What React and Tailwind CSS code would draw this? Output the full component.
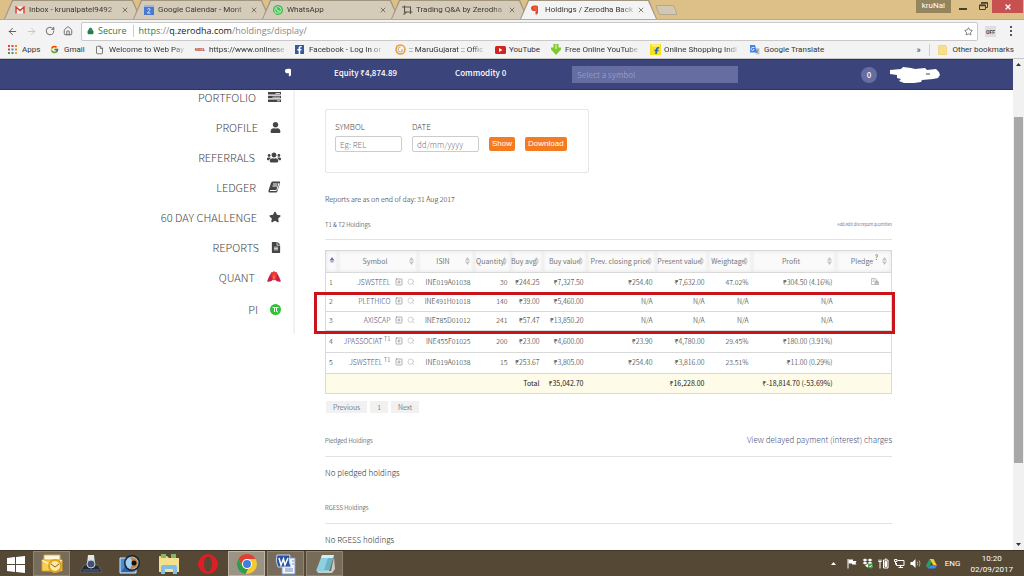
import React, { useState } from "react"
import {
  FaUser,
  FaUsers,
  FaStar,
  FaFileAlt,
  FaFacebookF,
  FaWhatsapp,
} from "react-icons/fa"
import { FcGoogle } from "react-icons/fc"
import {
  ArrowLeft,
  ArrowRight,
  RotateCw,
  House,
  LockKeyhole,
  Star,
  File,
  X,
  SquarePlus,
  Search,
} from "lucide-react"

/* ---------- small icons ---------- */

const GmailIcon = () => (
  <svg viewBox="0 0 20 16" className="w-[10px] h-[8px]">
    <rect x="1" y="1" width="18" height="14" fill="#f4f1ee" />
    <path d="M2 15V2l8 7 8-7v13" fill="none" stroke="#d5402f" strokeWidth="3" />
  </svg>
)

const CalendarIcon = () => (
  <svg viewBox="0 0 20 20" className="w-[10px] h-[10px]">
    <rect width="20" height="20" rx="1" fill="#4b78cf" />
    <rect width="20" height="4" fill="#9db5e0" />
    <path
      d="M7 9c1-3 6-2 5 1-.5 2-5 4-5 6h6"
      fill="none"
      stroke="#fff"
      strokeWidth="1.6"
    />
  </svg>
)

const WhatsappIcon = () => (
  <span className="flex items-center justify-center w-[10px] h-[10px] rounded-full bg-[#3fbf4f] text-white">
    <FaWhatsapp className="w-[8px] h-[8px]" />
  </span>
)

// crop-like frame with a tail in the lower left corner
const TradingIcon = () => (
  <svg viewBox="0 0 22 20" className="w-[11px] h-[10px]">
    <path
      d="M0 4h17v10M5 1v13h16M9 14l-6 5M17 14v4"
      fill="none"
      stroke="#5a544b"
      strokeWidth="2.2"
    />
  </svg>
)

// round head on the left, double stem on the right
const ZerodhaMark = ({ className }) => (
  <svg viewBox="0 0 14 20" className={className}>
    <path
      d="M7 1h4q3 0 3 3v11q0 3-3 4H9v-7H6Q0 12 0 6 0 1 7 1Z"
      fill="currentColor"
    />
    <path d="M6 4v4M10 3v9" stroke="#fff" strokeWidth="1" opacity=".5" />
  </svg>
)

const AppsIcon = () => (
  <svg viewBox="0 0 18 18" className="w-[9px] h-[9px]">
    <path d="M0 0h4v4H0zM0 7h4v4H0zM7 0h4v4H7z" fill="#d9463a" />
    <path d="M14 0h4v4h-4zM14 7h4v4h-4z" fill="#d98a2f" />
    <path d="M7 7h4v4H7z" fill="#4a7fd6" />
    <path d="M0 14h4v4H0zM7 14h4v4H7z" fill="#3d9c52" />
    <path d="M14 14h4v4h-4z" fill="#e0a930" />
  </svg>
)

const GujaratIcon = () => (
  <svg viewBox="0 0 22 22" className="w-[11px] h-[11px]">
    <circle cx="11" cy="11" r="9" fill="#fdf3e2" stroke="#e79a3c" strokeWidth="3" />
    <path d="M11 6a5 5 0 1 0 5 6h-4" fill="none" stroke="#a9adb5" strokeWidth="2" />
    <path d="M1 3l7-2-2 6z" fill="#f2b04f" />
  </svg>
)

const YoutubeIcon = () => (
  <svg viewBox="0 0 22 16" className="w-[11px] h-[8px]">
    <rect width="22" height="16" rx="3" fill="#cf2420" />
    <path d="M8 4v8l7-4z" fill="#fff" />
  </svg>
)

const DownloadIcon = () => (
  <svg viewBox="0 0 20 22" className="w-[10px] h-[11px]">
    <path d="M5 0h10v7h5v4L10 22 0 11V7h5z" fill="#7ccb2c" />
    <path d="M8 1h4v9H8z" fill="#b5e876" />
  </svg>
)

const FlipkartIcon = () => (
  <svg viewBox="0 0 22 22" className="w-[11px] h-[11px]">
    <rect width="22" height="22" rx="1" fill="#f7e01c" />
    <path d="M2 1h18l-3 4H5z" fill="#fbf3a0" />
    <path
      d="M18 8c-3-1-5 0-5 4l-1 8M9 13h8"
      fill="none"
      stroke="#2163b5"
      strokeWidth="3"
    />
  </svg>
)

const TranslateIcon = () => (
  <svg viewBox="0 0 20 20" className="w-[10px] h-[10px]">
    <path d="M9 6h10v13H12z" fill="#c9ced6" />
    <path d="M0 0h10l4 15H0z" fill="#4383ec" />
    <path d="M9 5H6a3 3 0 1 0 2 4H6" fill="none" stroke="#fff" strokeWidth="1.5" />
    <path d="M12 10h6m-3 0c0 3-1 4-3 6m1-4l4 5" stroke="#5d6c84" fill="none" />
  </svg>
)

const FolderIcon = () => (
  <svg viewBox="0 0 18 20" className="w-[9px] h-[10px]">
    <path d="M1 1h15v3h1v15H1z" fill="#fbdf86" stroke="#e8c35a" />
  </svg>
)

const TasksIcon = () => (
  <svg viewBox="0 0 26 20" className="w-[13px] h-[10px]">
    <path d="M0 0h26v5H0zM0 7.5h26v5H0zM0 15h26v5H0z" fill="#454545" />
    <path d="M15 2h9v1.5h-9zM9 9.5h15V11H9zM18 17h6v1.5h-6z" fill="#fff" />
  </svg>
)

const LedgerIcon = () => (
  <svg viewBox="0 0 26 24" className="w-[13px] h-[12px]">
    <path
      d="M9 1h14q2 0 1 3l-5 16q-1 3-3 3H3q-3 0-2-4L6 4q1-3 3-3Z"
      fill="#454545"
    />
    <path
      d="M10 6h9M9 10h9M4 19h12q1 0 2-2l4-13"
      fill="none"
      stroke="#fff"
      strokeWidth="2"
    />
  </svg>
)

const QuantIcon = () => (
  <svg viewBox="0 0 28 24" className="w-[14px] h-[12px]">
    <path d="M14 1L8 4Q3 12 0 21q5 1 9-1l5-5 5 5q4 2 9 1-3-9-8-17Z" fill="#c5214f" />
    <path d="M8 3l2-1 1 2 3-4 3 4 1-2 2 1-2 13-4 3-4-3z" fill="#ee3a30" />
    <path d="M14 7l-2 6 2 5 2-5z" fill="#ff7a4a" />
  </svg>
)

const PiIcon = () => (
  <svg viewBox="0 0 22 22" className="w-[11px] h-[11px]">
    <circle cx="11" cy="11" r="11" fill="#2fc234" />
    <path
      d="M5 7h12M9 7v9M13 7v7q0 2 3 2"
      fill="none"
      stroke="#fff"
      strokeWidth="2"
    />
  </svg>
)

const PledgeIcon = () => (
  <svg viewBox="0 0 16 14" className="w-[8px] h-[7px]" fill="none" stroke="#888">
    <path d="M8 13H1V1h8l2 2v3" />
    <path d="M3 4h6M3 7h4" />
    <path d="M8 8h7v5H8zM10 8V6h3v2" fill="#ccc" />
  </svg>
)

const SortIcon = () => (
  <svg viewBox="0 0 10 16" className="w-[5px] h-[8px] shrink-0">
    <path d="M5 0l5 7H0zM5 16l5-7H0z" fill="#c4c4c4" />
  </svg>
)

/* ---------- data ---------- */

const tabs = [
  { title: "Inbox - krunalpatel9492", icon: <GmailIcon /> },
  { title: "Google Calendar - Mont", icon: <CalendarIcon /> },
  { title: "WhatsApp", icon: <WhatsappIcon /> },
  { title: "Trading Q&A by Zerodha", icon: <TradingIcon /> },
  {
    title: "Holdings / Zerodha Back",
    icon: <ZerodhaMark className="w-[7px] h-[10px] text-[#e2472a]" />,
    active: true,
  },
]

const bookmarks = [
  { label: "Apps", icon: <AppsIcon />, width: "w-[42px]" },
  { label: "Gmail", icon: <FcGoogle className="w-[9px] h-[9px]" />, width: "w-[45px]" },
  {
    label: "Welcome to Web Pay",
    icon: <File className="w-[9px] h-[10px] text-[#555]" />,
    width: "w-[100px]",
    fade: true,
  },
  {
    label: "https://www.onlinese",
    icon: <span className="text-[4px] font-bold text-[#c0262c]">NSDL</span>,
    width: "w-[100px]",
    fade: true,
  },
  {
    label: "Facebook - Log In or",
    icon: (
      <span className="flex items-end justify-center w-[9px] h-[9px] bg-[#3b5998] text-white">
        <FaFacebookF className="w-[7px] h-[8px]" />
      </span>
    ),
    width: "w-[100px]",
    fade: true,
  },
  { label: ":: MaruGujarat :: Offic", icon: <GujaratIcon />, width: "w-[100px]", fade: true },
  { label: "YouTube", icon: <YoutubeIcon />, width: "w-[56px]" },
  { label: "Free Online YouTube", icon: <DownloadIcon />, width: "w-[99px]", fade: true },
  { label: "Online Shopping Indi", icon: <FlipkartIcon />, width: "w-[100px]", fade: true },
  { label: "Google Translate", icon: <TranslateIcon />, width: "w-[90px]" },
]

const menu = [
  { label: "PORTFOLIO", icon: <TasksIcon /> },
  { label: "PROFILE", icon: <FaUser className="w-[11px] h-[11px]" /> },
  { label: "REFERRALS", icon: <FaUsers className="w-[14px] h-[13px]" /> },
  { label: "LEDGER", icon: <LedgerIcon /> },
  { label: "60 DAY CHALLENGE", icon: <FaStar className="w-[12px] h-[12px]" /> },
  { label: "REPORTS", icon: <FaFileAlt className="w-[10px] h-[11px]" /> },
  { label: "QUANT", icon: <QuantIcon /> },
  { label: "PI", icon: <PiIcon /> },
]

const columns = [
  { label: "", width: "w-[12px]" },
  { label: "Symbol", width: "w-[80px]" },
  { label: "ISIN", width: "w-[56px]" },
  { label: "Quantity", width: "w-[37px]", tight: true },
  { label: "Buy avg", width: "w-[32px]", tight: true },
  { label: "Buy value", width: "w-[44px]", tight: true },
  { label: "Prev. closing price", width: "w-[69px]", tight: true },
  { label: "Present value", width: "w-[52px]", tight: true },
  { label: "Weightage", width: "w-[44px]", tight: true },
  { label: "Profit", width: "w-[84px]" },
  { label: "Pledge", width: "w-[56px]", help: true },
]

const holdings = [
  {
    symbol: "JSWSTEEL",
    height: "h-[20px]",
    pledge: true,
    cells: ["INE019A01038", "30", "₹244.25", "₹7,327.50", "₹254.40", "₹7,632.00", "47.02%", "₹304.50 (4.16%)"],
  },
  {
    symbol: "PLETHICO",
    height: "h-[19px]",
    cells: ["INE491H01018", "140", "₹39.00", "₹5,460.00", "N/A", "N/A", "N/A", "N/A"],
  },
  {
    symbol: "AXISCAP",
    height: "h-[19px]",
    cells: ["INE785D01012", "241", "₹57.47", "₹13,850.20", "N/A", "N/A", "N/A", "N/A"],
  },
  {
    symbol: "JPASSOCIAT",
    t1: true,
    height: "h-[22px]",
    cells: ["INE455F01025", "200", "₹23.00", "₹4,600.00", "₹23.90", "₹4,780.00", "29.45%", "₹180.00 (3.91%)"],
  },
  {
    symbol: "JSWSTEEL",
    t1: true,
    height: "h-[21px]",
    cells: ["INE019A01038", "15", "₹253.67", "₹3,805.00", "₹254.40", "₹3,816.00", "23.51%", "₹11.00 (0.29%)"],
  },
]

/* ---------- browser ---------- */

const TabStrip = () => (
  <div className="flex items-end h-[20px] shrink-0 bg-[#dcc088] border-b border-[#b3aa98] pl-1">
    {tabs.map(({ title, icon, active }) => (
      <div
        key={title}
        className={`w-[137px] h-[19px] -mr-2 px-px pt-px bg-[#a1957f] [clip-path:polygon(0_100%,8px_0,calc(100%-8px)_0,100%_100%)] ${active ? "z-10" : ""}`}
      >
        <div
          className={`flex items-center h-full pl-[10px] pr-[11px] [clip-path:polygon(0_100%,8px_0,calc(100%-8px)_0,100%_100%)] ${active ? "bg-[#f3f3f3]" : "bg-[#d5cbb9]"}`}
        >
          <span className="flex w-[14px] shrink-0">{icon}</span>
          <span className="flex-1 whitespace-nowrap text-[8px] leading-3 text-[#3a3733] [mask-image:linear-gradient(to_right,black_85%,#0003)]">
            {title}
          </span>
          <button aria-label="Close tab" className="ml-[3px]">
            <X className="w-[8px] h-[8px] text-[#4a4640]" />
          </button>
        </div>
      </div>
    ))}
    <button
      aria-label="New tab"
      className="ml-2 mb-1 w-[19px] h-[10px] rounded-xs bg-[#d2c7b3] border border-[#b5a88e] skew-x-[20deg]"
    />
    <div className="flex items-start ml-auto h-full">
      <span className="px-[6px] mr-2 h-[13px] bg-[#94855f] text-white text-[8px] leading-3">
        kruNal
      </span>
      <button aria-label="Minimize" className="mt-[8px] mr-3 w-[8px] h-[2px] bg-[#46402f]" />
      <button aria-label="Restore" className="mt-[2px]">
        <svg viewBox="0 0 18 16" className="w-[9px] h-[8px]" fill="none" stroke="#46402f" strokeWidth="2">
          <path d="M5 4V1h12v10h-3M1 6h12v9H1z" />
          <path d="M1 7h12M5 2h12" strokeWidth="3" />
        </svg>
      </button>
      <button
        aria-label="Close"
        className="flex items-center justify-center w-[31px] h-[13px] ml-1 mr-px bg-[#c75050] text-white"
      >
        <X className="w-[8px] h-[8px]" strokeWidth={4} />
      </button>
    </div>
  </div>
)

const AddressBar = () => (
  <div className="flex items-center h-[21px] shrink-0 bg-[#f3f3f3] pt-px pl-[7px] pr-2 text-[#555]">
    <button aria-label="Back">
      <ArrowLeft className="w-[11px] h-[11px]" />
    </button>
    <button aria-label="Forward" className="ml-2 text-[#c4c4c4]">
      <ArrowRight className="w-[11px] h-[11px]" />
    </button>
    <button aria-label="Reload" className="ml-2">
      <RotateCw className="w-[10px] h-[10px]" />
    </button>
    <button aria-label="Home" className="ml-2">
      <House className="w-[10px] h-[10px]" />
    </button>
    <div className="flex flex-1 items-center h-[19px] ml-2 pl-[5px] pr-1 bg-white border border-[#c9c9c9] rounded-xs text-[9px] font-['Open_Sans','Noto_Sans',sans-serif]">
      <LockKeyhole className="w-[7px] h-[8px] text-[#1f8048]" fill="currentColor" />
      <span className="ml-1 pr-[6px] mr-[5px] border-r border-[#ccc] leading-3 text-[#1f8048]">
        Secure
      </span>
      <span className="text-[#888]">
        <span className="text-[#1f8048]">https</span>://
        <span className="text-[#222]">q.zerodha.com</span>/holdings/display/
      </span>
      <button aria-label="Bookmark this page" className="ml-auto">
        <Star className="w-[9px] h-[9px]" />
      </button>
    </div>
    <button className="ml-[7px] w-[11px] h-[11px] bg-[#dedede] text-[5px] leading-3 font-bold text-[#444]">
      OFF
    </button>
    <button aria-label="Menu" className="flex flex-col gap-[2px] ml-[14px] mr-1">
      <i className="w-[2px] h-[2px] bg-[#555]" />
      <i className="w-[2px] h-[2px] bg-[#555]" />
      <i className="w-[2px] h-[2px] bg-[#555]" />
    </button>
  </div>
)

const BookmarkBar = () => (
  <div className="flex items-center h-[18px] shrink-0 bg-[#f3f3f3] border-b border-[#c8c8c8] pl-2 pr-[10px] text-[8px] leading-3 text-[#333]">
    {bookmarks.map(({ label, icon, width, fade }) => (
      <a key={label} href="#" className={`flex items-center shrink-0 ${width}`}>
        <span className="flex items-center w-[14px] shrink-0">{icon}</span>
        <span
          className={`whitespace-nowrap ${fade ? "[mask-image:linear-gradient(to_right,black_85%,#0003)]" : ""}`}
        >
          {label}
        </span>
      </a>
    ))}
    <span className="ml-auto mr-2 text-[9px]">»</span>
    <a href="#" className="flex items-center gap-[6px] pl-2 border-l border-[#d0d0d0]">
      <FolderIcon />
      Other bookmarks
    </a>
  </div>
)

/* ---------- page ---------- */

const Navbar = () => (
  <header className="flex items-center h-[31px] shrink-0 bg-[#3c457b] border-y border-[#2c3463] text-white text-[8px] font-medium">
    <div className="flex justify-end w-[291px] shrink-0 pb-1">
      <ZerodhaMark className="w-[6px] h-[9px]" />
    </div>
    <span className="w-[121px] ml-[43px] pb-[3px]">Equity ₹4,874.89</span>
    <span className="w-[117px] pb-[3px]">Commodity 0</span>
    <input
      aria-label="Select a symbol"
      placeholder="Select a symbol"
      className="w-[166px] h-[17px] px-[5px] bg-[#656da1] font-normal placeholder:text-[#9198c6]"
    />
    <span className="flex items-center justify-center ml-auto w-[16px] h-[16px] rounded-full bg-[#656da1]">
      0
    </span>
    <svg viewBox="0 0 50 16" className="ml-[13px] mr-[73px] w-[50px] h-[16px]">
      <path
        d="M0 3l11-1 2-2 8 1 4 1 10-1 2 2 9-1 3 3 1 3-2 3-5 1-11 1-1 2-7 1-10 0-5-2 2-2-4-1 0-3-7-1-1-2Z"
        fill="#fff"
      />
      <path d="M36 7h4" stroke="#3c457b" />
    </svg>
  </header>
)

const Sidebar = () => (
  <aside className="w-[295px] h-[244px] shrink-0 border-r-2 border-[#f2f2f2] pr-3">
    <ul className="-mt-2">
      {menu.map(({ label, icon }) => (
        <li key={label} className="h-[30px] last:h-[34px] last:pt-[2px]">
          <a
            href="#"
            className="flex items-center justify-end gap-3 h-[30px] text-[11px] font-light text-[#444]"
          >
            {label}
            <span className="text-[#454545]">{icon}</span>
          </a>
        </li>
      ))}
    </ul>
  </aside>
)

const FilterForm = () => {
  const [symbol, setSymbol] = useState("")
  const [date, setDate] = useState("")

  return (
    <form
      onSubmit={(e) => e.preventDefault()}
      className="flex items-start w-[264px] h-[64px] pt-[10px] px-[9px] border border-[#e6e6e6] rounded-xs text-[#444] text-[8px] leading-[14px] font-light"
    >
      <label className="w-[67px]">
        SYMBOL
        <input
          value={symbol}
          onChange={(e) => setSymbol(e.target.value)}
          placeholder="Eg: REL"
          className="block w-full h-[16px] mt-[2px] px-1 border border-[#ccc] rounded-xs placeholder:text-[#777]"
        />
      </label>
      <label className="w-[67px] ml-[10px]">
        DATE
        <input
          value={date}
          onChange={(e) => setDate(e.target.value)}
          placeholder="dd/mm/yyyy"
          className="block w-full h-[16px] mt-[2px] px-1 border border-[#ccc] rounded-xs placeholder:text-[#777]"
        />
      </label>
      <button className="mt-[17px] ml-[10px] px-[3px] h-[14px] rounded-xs bg-[#f47b20] text-white font-normal font-['Liberation_Sans',sans-serif]">
        Show
      </button>
      <button className="mt-[17px] ml-[10px] px-[3px] h-[14px] rounded-xs bg-[#f47b20] text-white font-normal font-['Liberation_Sans',sans-serif]">
        Download
      </button>
    </form>
  )
}

const HoldingsTable = () => (
  <div className="relative mt-[10px]">
    <table className="w-full table-fixed border border-[#d9d9d9] text-[7px] leading-[10px] font-light text-[#222]">
      <thead>
        <tr className="h-[22px] bg-[#fafafa] border-b border-[#d9d9d9] text-[#777]">
          {columns.map(({ label, width, tight, help }) => (
            <th
              key={label}
              className={`${width} p-0 pb-[2px] font-normal whitespace-nowrap shadow-[inset_0_0_4px_#e4e4e4]`}
            >
              {label ? (
                <div className={`flex items-center ${tight ? "justify-end pr-1" : help ? "justify-end gap-1 pr-1" : "pr-1"}`}>
                  <span className={tight ? "-mr-[3px]" : help ? "" : "flex-1 pl-1 text-center"}>
                    {label}
                    {help && <sup className="text-[7px] text-[#555]"> ?</sup>}
                  </span>
                  <SortIcon />
                </div>
              ) : (
                <svg viewBox="0 0 10 16" className="w-[6px] h-[8px] mx-auto">
                  <path d="M5 0l5 7H0z" fill="#6a70b0" />
                  <path d="M2 8h6v3H2z" fill="#9ea2cc" />
                </svg>
              )}
            </th>
          ))}
        </tr>
      </thead>
      <tbody>
        {holdings.map(({ symbol, t1, height, cells, pledge }, i) => (
          <tr key={i} className={`${height} border-b border-[#d9d9d9]`}>
            <td className="p-0 pb-[2px] pl-[3px]">{i + 1}</td>
            <td className="p-0 pb-[2px] pr-[3px]">
              <div className="flex items-center justify-end gap-1 text-[#3f4370] whitespace-nowrap">
                <span>
                  {symbol}
                  {t1 && <sup className="text-[6px]"> T1</sup>}
                </span>
                <SquarePlus className="w-[8px] h-[8px] text-[#888]" />
                <Search className="w-[8px] h-[8px] text-[#bbb]" />
              </div>
            </td>
            {cells.map((cell, n) => (
              <td key={n} className="p-0 pb-[2px] pr-[3px] text-right whitespace-nowrap">
                {cell}
              </td>
            ))}
            <td className="p-0 pb-[2px] pr-3">
              <span className="flex justify-end">{pledge && <PledgeIcon />}</span>
            </td>
          </tr>
        ))}
      </tbody>
      <tfoot>
        <tr className="h-[20px] bg-[#fffbe9] text-right font-normal text-[#222] whitespace-nowrap">
          <td colSpan={5} className="p-0 pb-px pr-[3px]">Total</td>
          <td className="p-0 pb-px pr-[3px]">₹35,042.70</td>
          <td />
          <td className="p-0 pb-px pr-[3px]">₹16,228.00</td>
          <td />
          <td className="p-0 pb-px pr-[3px]">₹-18,814.70 (-53.69%)</td>
          <td />
        </tr>
      </tfoot>
    </table>
    {/* marked rows */}
    <div className="absolute top-[42px] -left-[11px] -right-[3px] h-[42px] border-3 border-[#c9141c]" />
  </div>
)

const Section = ({ title, text, children }) => (
  <section>
    <div className="flex items-center justify-between h-[33px] border-b border-[#e2e2e2]">
      <h2 className="text-[6px] text-[#222]">{title}</h2>
      {children}
    </div>
    <p className="h-[34px] pt-2 text-[8px] leading-4 text-[#333]">{text}</p>
  </section>
)

const Main = () => (
  <main className="flex-1 pl-[30px] pr-[122px] pt-[19px] font-light">
    <FilterForm />
    <p className="mt-5 text-[7px] leading-3 text-[#222]">
      Reports are as on end of day: 31 Aug 2017
    </p>
    <div className="flex items-center justify-between h-[31px] mt-1 border-b border-[#e2e2e2]">
      <h2 className="text-[6px] text-[#222]">T1 &amp; T2 Holdings</h2>
      <a href="#" className="text-[4px] text-[#30346b]">
        Add/edit discrepant quantities
      </a>
    </div>
    <HoldingsTable />
    <nav className="flex gap-[3px] mt-[7px] pl-px text-[7px] leading-[12px] text-[#444]">
      <button className="px-[7px] bg-[#f1f1f1]">Previous</button>
      <button className="px-[7px] bg-[#f1f1f1]">1</button>
      <button className="px-[7px] bg-[#f1f1f1]">Next</button>
    </nav>
    <div className="mt-[11px]">
      <Section title="Pledged Holdings" text="No pledged holdings">
        <a href="#" className="text-[8px] text-[#484e78]">
          View delayed payment (interest) charges
        </a>
      </Section>
      <Section title="RGESS Holdings" text="No RGESS holdings" />
    </div>
  </main>
)

const Scrollbar = () => (
  <div className="flex flex-col items-center w-[11px] shrink-0 bg-[#f1f1f1] py-1">
    <svg viewBox="0 0 10 6" className="w-[5px] h-[3px]">
      <path d="M5 0l5 6H0z" fill="#333" />
    </svg>
    <div className="w-[9px] h-[346px] mt-[51px] bg-[#a8a8a8]" />
    <svg viewBox="0 0 10 6" className="w-[5px] h-[3px] mt-auto">
      <path d="M0 0h10L5 6z" fill="#333" />
    </svg>
  </div>
)

/* ---------- taskbar ---------- */

const apps = [
  {
    name: "Outlook",
    open: true,
    icon: (
      <svg viewBox="0 0 22 22" className="w-[22px] h-[22px]">
        <path d="M3 2h16v8H3z" fill="#fff6dc" stroke="#d8b04c" />
        <path d="M1 7h20v11H1z" fill="#f6cf5b" stroke="#dda522" />
        <path d="M1 7l10 6 10-6" fill="none" stroke="#fff" />
        <circle cx="14" cy="13" r="6" fill="#fbe9a8" stroke="#e0a21b" strokeWidth="2" />
        <path d="M10 11l4 3 4-3" fill="none" stroke="#8a6514" />
      </svg>
    ),
  },
  {
    name: "Scanner",
    icon: (
      <svg viewBox="0 0 22 22" className="w-[22px] h-[22px]">
        <path d="M4 12h14l4 7H0z" fill="#26292f" stroke="#5c626c" />
        <path d="M3 17h16" stroke="#4f6f9f" />
        <path d="M8 2h6l1 9H7z" fill="#e4e7ea" />
        <circle cx="11" cy="11" r="4" fill="#3d5274" stroke="#c9d0d8" />
      </svg>
    ),
  },
  {
    name: "Photo viewer",
    icon: (
      <svg viewBox="0 0 22 22" className="w-[22px] h-[22px]">
        <path d="M1 5h16v15H1z" fill="#4a8fd4" stroke="#d8e7f5" />
        <path d="M2 19l5-7 7 7z" fill="#2d62ad" />
        <circle cx="13" cy="10" r="8" fill="#18222c" />
        <circle cx="13" cy="10" r="6.5" fill="#9fd0ef" />
        <path d="M11 4q7 0 8 6-1 6-8 6 4-6 0-12z" fill="#c98243" />
        <circle cx="15" cy="10" r="2.5" fill="#111" />
      </svg>
    ),
  },
  {
    name: "Explorer",
    icon: (
      <svg viewBox="0 0 22 22" className="w-[22px] h-[22px]">
        <path d="M1 3h8l2 2h10v14H1z" fill="#ecd27a" />
        <path d="M3 1h5v4H3zM13 1h5v4h-5z" fill="#7dbb6a" />
        <path d="M1 5h20v14H1z" fill="#f5e08e" />
        <path d="M3 14q0-2 2-2h12q2 0 2 2v7h-4v-5H7v5H3z" fill="#7fbfe6" />
      </svg>
    ),
  },
  {
    name: "Opera",
    icon: (
      <svg viewBox="0 0 22 22" className="w-[22px] h-[22px]">
        <ellipse cx="11" cy="11" rx="10" ry="10" fill="#da1f26" />
        <ellipse cx="11" cy="11" rx="4" ry="7.5" fill="#554834" />
      </svg>
    ),
  },
  {
    name: "Chrome",
    open: true,
    current: true,
    icon: (
      <svg viewBox="0 0 22 22" className="w-[22px] h-[22px]">
        <circle cx="11" cy="11" r="10" fill="#f7c92d" />
        <path d="M2.3 6A10 10 0 0 1 19.7 6H11a5 5 0 0 0-4.5 7z" fill="#dc4234" />
        <path d="M2.3 6l4.5 7.5A5 5 0 0 0 12 16l-2.5 5A10 10 0 0 1 2.3 6z" fill="#2e9c4e" />
        <circle cx="11" cy="11" r="5" fill="#fff" />
        <circle cx="11" cy="11" r="4" fill="#3f7de0" />
      </svg>
    ),
  },
  {
    name: "Word",
    open: true,
    icon: (
      <svg viewBox="0 0 22 22" className="w-[22px] h-[22px]">
        <path d="M7 5h13v16H7z" fill="#f4f7fc" stroke="#7e9bcd" />
        <path d="M10 16h8M10 18h8M17 8h2M17 11h2" stroke="#6d8ac0" />
        <path d="M2 2h13q-2 6 1 12H3Q0 8 2 2z" fill="#2b53a4" stroke="#c5d3ec" />
        <path d="M4 5l2 7 2.5-6L10 12l3-7" fill="none" stroke="#fff" strokeWidth="1.5" />
      </svg>
    ),
  },
  {
    name: "Notepad",
    open: true,
    icon: (
      <svg viewBox="0 0 22 22" className="w-[22px] h-[22px]">
        <path d="M17 18l3-14 1 12-3 4H4l-1-2z" fill="#c9ccc8" />
        <path d="M8 2h12l-5 16H2z" fill="#8fd0de" />
        <path d="M8 2h12l-1 3H7z" fill="#d5eef2" />
        <path d="M14 5h5l-4 12h-5z" fill="#6bb3c6" />
      </svg>
    ),
  },
]

const Tray = () => (
  <div className="flex items-center gap-[5px] text-white">
    <svg viewBox="0 0 10 6" className="w-[5px] h-[3px] mr-[5px]">
      <path d="M5 0l5 6H0z" fill="#fff" />
    </svg>
    <svg viewBox="0 0 22 22" className="w-[11px] h-[11px]">
      <path d="M4 2v19" stroke="#fff" strokeWidth="2" />
      <path d="M5 3h9v3h7l-2 4 2 3h-9v-2H5z" fill="#fff" />
    </svg>
    <svg viewBox="0 0 22 22" className="w-[11px] h-[11px]">
      <path
        d="M6 1l5 3-5 3-5-3zM16 1l5 3-5 3-5-3zM6 7l5 3-5 3-5-3zM16 7l5 3-5 3-5-3zM11 12l5 3-5 4-5-4z"
        fill="#fff"
      />
      <circle cx="17" cy="16" r="5" fill="#3aa845" />
      <path d="M14.5 16l2 2 3-4" fill="none" stroke="#fff" strokeWidth="1.5" />
    </svg>
    <svg viewBox="0 0 22 22" className="w-[11px] h-[11px]" fill="none" stroke="#fff" strokeWidth="2">
      <path d="M4 7v14M1 7h6M2 3v4M6 3v4" />
      <path d="M11 4h9v16h-9zM14 2h3" />
      <path d="M14 7h3v10h-3z" fill="#fff" />
    </svg>
    <svg viewBox="0 0 22 22" className="w-[11px] h-[11px]" fill="none" stroke="#fff" strokeWidth="2">
      <path d="M7 5h13v10H5v-5M9 19h9M13 15v4" />
      <path d="M1 3h5v4H1zM3 7v6" />
    </svg>
    <svg viewBox="0 0 22 22" className="w-[11px] h-[11px]">
      <path d="M1 8h4l6-6v18l-6-6H1z" fill="#fff" />
      <path d="M14 7q3 4 0 8M18 5q4 6 0 12" fill="none" stroke="#ccc" strokeWidth="1.5" />
    </svg>
    <svg viewBox="0 0 22 20" className="w-[11px] h-[10px]">
      <path d="M7 0h8l7 13h-7z" fill="#f7ca2f" />
      <path d="M7 0l4 7-7 12-4-6z" fill="#1fa463" />
      <path d="M8 13h14l-4 6H4z" fill="#4285f4" />
    </svg>
  </div>
)

const Taskbar = () => (
  <footer className="flex items-center h-[26px] shrink-0 bg-[#554834] border-t border-[#3f3526] text-white">
    <button aria-label="Start" className="w-[33px] h-full pl-[7px]">
      <svg viewBox="0 0 18 18" className="w-[18px] h-[18px]">
        <path d="M0 3l8-1v7H0zM9 2l9-1v8H9zM0 10h8v7l-8-1zM9 10h9v8l-9-1z" fill="#fff" />
      </svg>
    </button>
    {apps.map(({ name, icon, open, current }) => (
      <button
        key={name}
        aria-label={name}
        className={`flex items-center justify-center w-[37px] h-full mr-[2px] border ${
          current
            ? "bg-[#9b9484] border-[#bdb7aa]"
            : open
              ? "bg-[#776c59] border-[#8f8572]"
              : "border-transparent"
        }`}
      >
        {icon}
      </button>
    ))}
    <div className="flex items-center ml-auto pr-[11px]">
      <Tray />
      <span className="ml-2 text-[8px]">ENG</span>
      <div className="ml-[10px] text-center text-[8px] leading-[11px]">
        <p>10:20</p>
        <p>02/09/2017</p>
      </div>
    </div>
  </footer>
)

const App = () => {
  return (
    <div className="flex flex-col h-screen overflow-hidden bg-white font-['Roboto','Noto_Sans',sans-serif]">
      <TabStrip />
      <AddressBar />
      <BookmarkBar />
      <div className="flex flex-1 min-h-0 font-['Noto_Sans_CJK_SC','Noto_Sans',sans-serif]">
        <div className="flex flex-col flex-1 min-w-0">
          <Navbar />
          <div className="flex items-start flex-1 min-h-0 overflow-hidden">
            <Sidebar />
            <Main />
          </div>
        </div>
        <Scrollbar />
      </div>
      <Taskbar />
    </div>
  )
}

export default App
